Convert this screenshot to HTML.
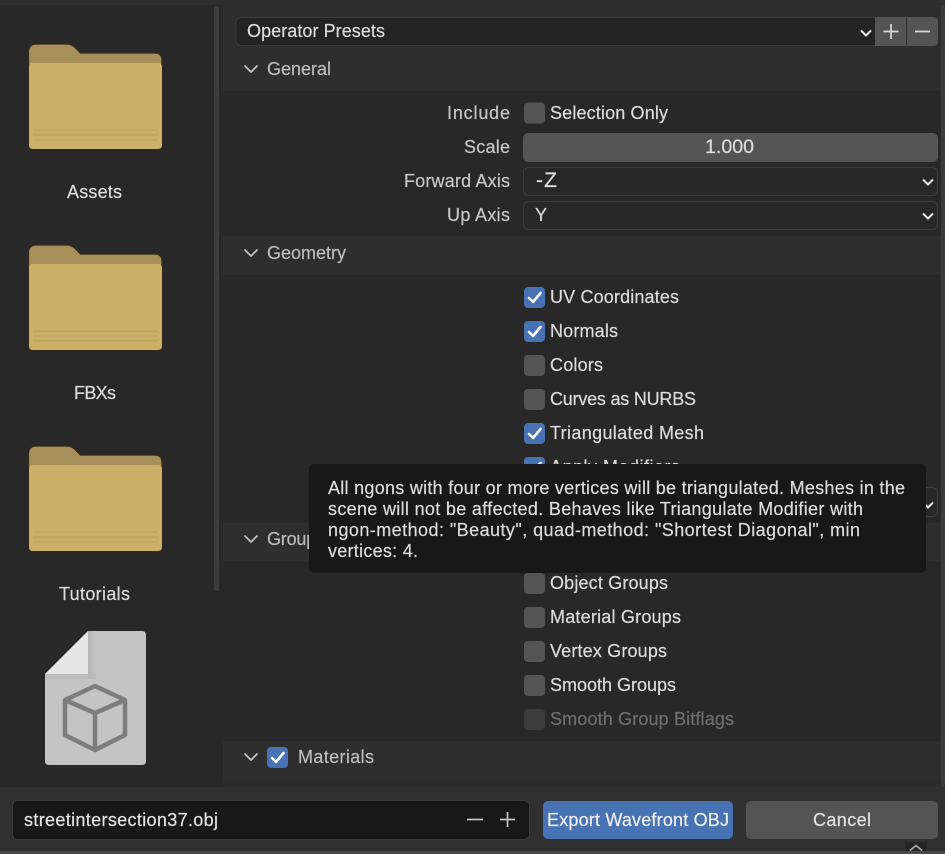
<!DOCTYPE html>
<html><head><meta charset="utf-8"><title>Export Wavefront OBJ</title>
<style>
html,body{margin:0;padding:0;background:#2e2e2e;width:945px;height:854px;overflow:hidden}
svg{display:block}
text{font-family:"Liberation Sans",sans-serif;font-size:18px;fill:#dcdcdc;stroke:#dcdcdc;stroke-width:.2px}
.l{fill:#c6c6c6;stroke:#c6c6c6}
.h{fill:#bcbcbc;stroke:#bcbcbc}
.c{fill:#e2e2e2;stroke:#e2e2e2}
.w{fill:#f0f0f0;stroke:#f0f0f0}
</style></head><body>
<svg xmlns="http://www.w3.org/2000/svg" width="945" height="854" viewBox="0 0 945 854">
<defs>
<linearGradient id="fs" x1="0" x2="1" y1="0" y2="0"><stop offset="0" stop-color="#b4b4b4"/><stop offset="1" stop-color="#c4c4c4"/></linearGradient>
<g id="folder">
<path d="M28.500 52q0-8 8-8h30q5 0 8 3l6 6h74q7.500 0 7.500 7v85q0 4.500-4.500 4.500H33q-4.500 0-4.500-4.500z" fill="#a68f58" stroke="#33291a" stroke-width="1.200"/>
<path d="M29 67q0-4 4-4h125q4 0 4 4v78q0 4-4 4H33q-4 0-4-4z" fill="#cdb068"/>
<path d="M33 130h125M33 135h125M33 140h125" stroke="#b89c5a" stroke-width="1"/>
</g>
<g id="cb"><rect x="0" y="0" width="21" height="21" rx="4" fill="#545454"/></g>
<g id="cc"><rect x="0" y="0" width="21" height="21" rx="4" fill="#4772b3"/><path d="M5 11l4 4 7.500-9" fill="none" stroke="#fff" stroke-width="2.600" stroke-linecap="round" stroke-linejoin="round"/></g>
<path id="chev" d="M-6.500-3.500L0 3l6.500-6.500" fill="none" stroke="#c4c4c4" stroke-width="1.700"/>
<path id="sch" d="M-5-2.500L0 2.500l5-5" fill="none" stroke="#e6e6e6" stroke-width="2"/>
</defs>

<rect width="945" height="854" fill="#2e2e2e"/>
<!-- sidebar -->
<rect x="0" y="5" width="223" height="782" fill="#282828"/>
<rect x="214" y="6" width="5" height="585" rx="2" fill="#3c3c3c"/>
<use href="#folder"/>
<use href="#folder" y="201"/>
<use href="#folder" y="402"/>
<text x="67" y="198" textLength="55" lengthAdjust="spacing">Assets</text>
<text x="74" y="399" textLength="42" lengthAdjust="spacing">FBXs</text>
<text x="59" y="600" textLength="71" lengthAdjust="spacing">Tutorials</text>
<path d="M88 631h54q4 0 4 4v126q0 4-4 4H49q-4 0-4-4V674z" fill="#c4c4c4"/>
<rect x="88" y="631" width="8" height="48" fill="url(#fs)"/>
<rect x="45" y="674" width="51" height="5" fill="#b8b8b8" opacity=".6"/>
<path d="M88 631v43H45z" fill="#e6e6e6"/>
<g fill="none" stroke="#7d7d7d" stroke-width="4.500" stroke-linejoin="round">
<path d="M95 686l30 14v35l-30 15-30-15v-35zM65 700l30 13 30-13M95 713v37"/>
</g>

<!-- main panels -->
<rect x="223" y="5" width="718" height="782" fill="#2e2e2e"/>
<rect x="223" y="91" width="718" height="145" fill="#282828"/>
<rect x="223" y="275" width="718" height="248" fill="#282828"/>
<rect x="223" y="561" width="718" height="180" fill="#282828"/>
<rect x="223" y="779" width="718" height="8" fill="#2c2c2c"/>
<rect x="941" y="5" width="4" height="782" fill="#3a3a3a"/>

<!-- presets -->
<rect x="236" y="17.500" width="660" height="28" rx="5" fill="#232323" stroke="#3a3a3a"/>
<path d="M875 17h31v29h-31z" fill="#545454"/>
<path d="M907 17h26q5 0 5 5v19q0 5-5 5h-26z" fill="#545454"/>
<text x="247" y="37" textLength="138" lengthAdjust="spacing">Operator Presets</text>
<use href="#sch" x="866" y="33"/>
<path d="M891 24v15M883.500 31.500h15M915 31.500h15" stroke="#dcdcdc" stroke-width="1.700" fill="none"/>

<!-- General -->
<use href="#chev" x="251" y="69"/>
<text class="h" x="267" y="75" textLength="64" lengthAdjust="spacing">General</text>
<text class="l" x="447" y="119" textLength="63" lengthAdjust="spacing">Include</text>
<use href="#cb" x="524" y="102.500"/>
<text x="550" y="119" textLength="118" lengthAdjust="spacing">Selection Only</text>
<text class="l" x="464" y="153" textLength="46" lengthAdjust="spacing">Scale</text>
<rect x="523" y="133" width="415" height="29" rx="5" fill="#545454"/>
<text x="705" y="153" style="font-size:19.500px" textLength="49" lengthAdjust="spacing">1.000</text>
<text class="l" x="404" y="187" textLength="106" lengthAdjust="spacing">Forward Axis</text>
<rect x="523.500" y="167.500" width="414" height="28" rx="5" fill="#282828" stroke="#3c3c3c"/>
<text x="536" y="187" style="font-size:21px" textLength="21" lengthAdjust="spacing">-Z</text>
<use href="#sch" x="928" y="182"/>
<text class="l" x="447" y="221" textLength="63" lengthAdjust="spacing">Up Axis</text>
<rect x="523.500" y="201.500" width="414" height="28" rx="5" fill="#282828" stroke="#3c3c3c"/>
<text x="535" y="221" textLength="12" lengthAdjust="spacing">Y</text>
<use href="#sch" x="928" y="216"/>

<!-- Geometry -->
<use href="#chev" x="251" y="253"/>
<text class="h" x="267" y="259" textLength="79" lengthAdjust="spacing">Geometry</text>
<use href="#cc" x="524" y="287"/>
<text x="550" y="303" textLength="129" lengthAdjust="spacing">UV Coordinates</text>
<use href="#cc" x="524" y="321"/>
<text x="550" y="337" textLength="68" lengthAdjust="spacing">Normals</text>
<use href="#cb" x="524" y="355"/>
<text x="550" y="371" textLength="53" lengthAdjust="spacing">Colors</text>
<use href="#cb" x="524" y="389"/>
<text x="550" y="405" textLength="146" lengthAdjust="spacing">Curves as NURBS</text>
<use href="#cc" x="524" y="423"/>
<text x="550" y="439" textLength="154" lengthAdjust="spacing">Triangulated Mesh</text>
<use href="#cc" x="524" y="457"/>
<text x="550" y="473" textLength="130" lengthAdjust="spacing">Apply Modifiers</text>
<rect x="800" y="487.500" width="137.500" height="29" rx="5" fill="#282828" stroke="#3c3c3c"/>
<use href="#sch" x="928" y="505"/>

<!-- Groups -->
<use href="#chev" x="251" y="539"/>
<text class="h" x="267" y="545" textLength="58" lengthAdjust="spacing">Groups</text>
<use href="#cb" x="524" y="573"/>
<text x="550" y="589" textLength="118" lengthAdjust="spacing">Object Groups</text>
<use href="#cb" x="524" y="607"/>
<text x="550" y="623" textLength="131" lengthAdjust="spacing">Material Groups</text>
<use href="#cb" x="524" y="641"/>
<text x="550" y="657" textLength="117" lengthAdjust="spacing">Vertex Groups</text>
<use href="#cb" x="524" y="675"/>
<text x="550" y="691" textLength="126" lengthAdjust="spacing">Smooth Groups</text>
<rect x="524" y="709" width="21" height="21" rx="4" fill="#3c3c3c"/>
<text style="fill:#6e6e6e;stroke:#6e6e6e" x="550" y="725" textLength="184" lengthAdjust="spacing">Smooth Group Bitflags</text>

<!-- Materials -->
<use href="#chev" x="251" y="757"/>
<use href="#cc" x="267" y="747"/>
<text class="h" x="298" y="763" textLength="76" lengthAdjust="spacing">Materials</text>

<!-- Bottom bar -->
<rect x="0" y="787" width="945" height="64" fill="#303030"/>
<rect x="0" y="851" width="945" height="3" fill="#4a4a4a"/>
<rect x="12.500" y="800.500" width="517" height="39" rx="5" fill="#181818" stroke="#3a3a3a"/>
<text class="c" x="24" y="826" textLength="194" lengthAdjust="spacing">streetintersection37.obj</text>
<path d="M467 819.500h16M500 819.500h15M507.500 812v15" stroke="#c4c4c4" stroke-width="1.700" fill="none"/>
<rect x="543" y="801" width="190" height="38" rx="5" fill="#4772b3"/>
<text class="w" x="547" y="826" textLength="182" lengthAdjust="spacing">Export Wavefront OBJ</text>
<rect x="746" y="801" width="192" height="38" rx="5" fill="#545454"/>
<text class="c" x="813" y="826" textLength="58" lengthAdjust="spacing">Cancel</text>
<rect x="905" y="842" width="22" height="9" fill="#262626"/>
<path d="M910 850.500l6-5 6 5" fill="none" stroke="#b0b0b0" stroke-width="1.500"/>

<!-- Tooltip -->
<rect x="309" y="464" width="617" height="109" rx="5" fill="#181818"/>
<text x="328" y="494" textLength="577" lengthAdjust="spacing">All ngons with four or more vertices will be triangulated. Meshes in the</text>
<text x="328" y="515" textLength="535" lengthAdjust="spacing">scene will not be affected. Behaves like Triangulate Modifier with</text>
<text x="328" y="536" textLength="532" lengthAdjust="spacing">ngon-method: "Beauty", quad-method: "Shortest Diagonal", min</text>
<text x="328" y="557" textLength="90" lengthAdjust="spacing">vertices: 4.</text>
</svg>
</body></html>
